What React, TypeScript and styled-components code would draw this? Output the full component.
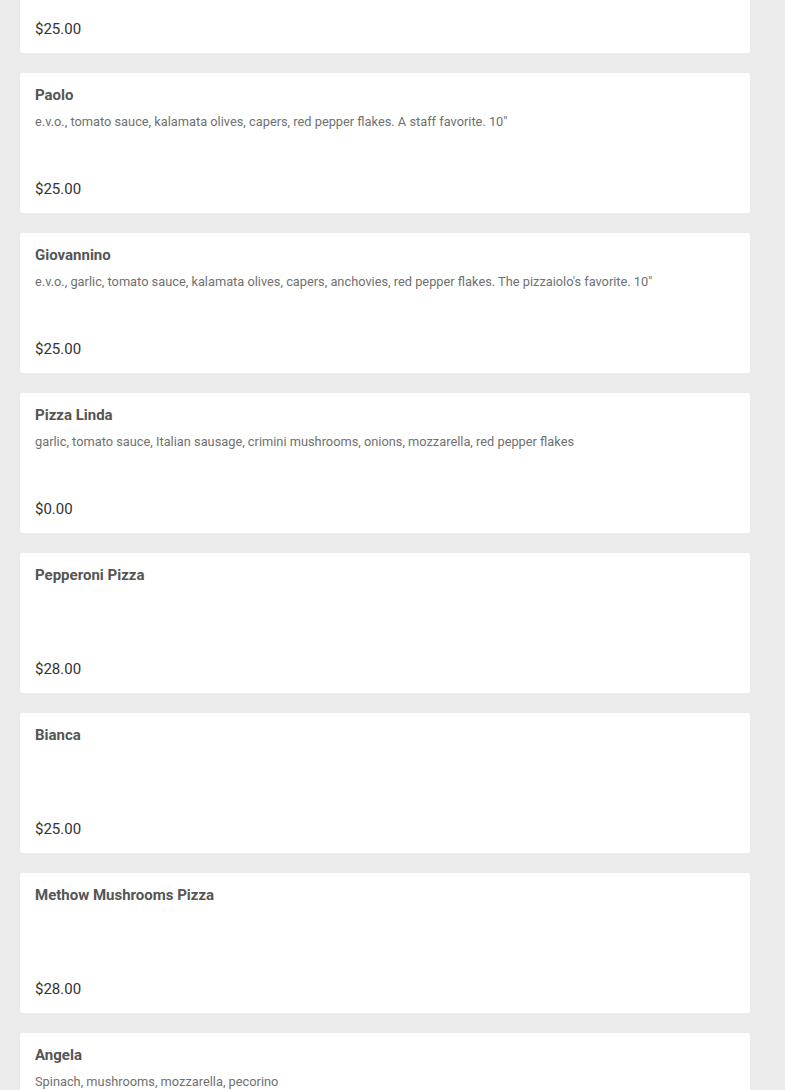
import React from "react";
import styled, { createGlobalStyle } from "styled-components";

const Global = createGlobalStyle`
  html, body { margin: 0; padding: 0; background: #ebebeb; }
  body { font-family: Roboto, "Liberation Sans", sans-serif; overflow: hidden; }
`;

const List = styled.div`
  display: flex;
  flex-direction: column;
  gap: 20px;
  width: 730px;
  margin: -87px 0 0 20px;
`;

const Card = styled.div`
  box-sizing: border-box;
  height: 140px;
  background: #fff;
  border-radius: 2px;
  padding: 12px 15px 14px;
  display: flex;
  flex-direction: column;
`;

const Title = styled.div`
  font-size: 15px;
  font-weight: 700;
  line-height: 20px;
  color: #555;
`;

const Desc = styled.div`
  margin-top: 8px;
  font-size: 12.8px;
  line-height: 18px;
  color: #707070;
`;

const Price = styled.div`
  margin-top: auto;
  font-size: 15px;
  line-height: 20px;
  color: #333;
`;

const items = [
  { name: "Margherita", desc: "", price: "$25.00" },
  { name: "Paolo", desc: "e.v.o., tomato sauce, kalamata olives, capers, red pepper flakes. A staff favorite. 10\"", price: "$25.00" },
  { name: "Giovannino", desc: "e.v.o., garlic, tomato sauce, kalamata olives, capers, anchovies, red pepper flakes. The pizzaiolo's favorite. 10\"", price: "$25.00" },
  { name: "Pizza Linda", desc: "garlic, tomato sauce, Italian sausage, crimini mushrooms, onions, mozzarella, red pepper flakes", price: "$0.00" },
  { name: "Pepperoni Pizza", desc: "", price: "$28.00" },
  { name: "Bianca", desc: "", price: "$25.00" },
  { name: "Methow Mushrooms Pizza", desc: "", price: "$28.00" },
  { name: "Angela", desc: "Spinach, mushrooms, mozzarella, pecorino", price: "$25.00" },
];

export default function App() {
  return (
    <>
      <Global />
      <List>
        {items.map((it) => (
          <Card key={it.name}>
            <Title>{it.name}</Title>
            {it.desc && <Desc>{it.desc}</Desc>}
            <Price>{it.price}</Price>
          </Card>
        ))}
      </List>
    </>
  );
}
